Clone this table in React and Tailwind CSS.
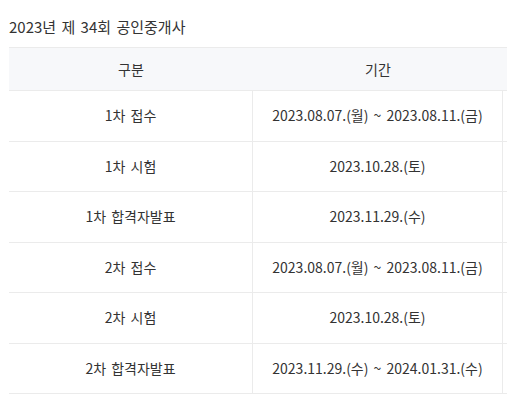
export default function App() {
  const rows = [
    ["1차 접수", "2023.08.07.(월) ~ 2023.08.11.(금)"],
    ["1차 시험", "2023.10.28.(토)"],
    ["1차 합격자발표", "2023.11.29.(수)"],
    ["2차 접수", "2023.08.07.(월) ~ 2023.08.11.(금)"],
    ["2차 시험", "2023.10.28.(토)"],
    ["2차 합격자발표", "2023.11.29.(수) ~ 2024.01.31.(수)"],
  ];
  return (
    <div
      className="w-[507px] h-[400px] overflow-hidden bg-white text-[#333] text-[14px] [word-spacing:2px]"
      style={{ fontFamily: '"Noto Sans CJK KR", "Noto Sans", sans-serif' }}
    >
      <div className="pl-[9px] pt-[17px] leading-[20px] h-[47px] text-[15px]">2023년 제 34회 공인중개사</div>
      <div className="ml-[9px] w-[620px]">
        <div className="grid grid-cols-[244px_250px_126px] h-[44px] bg-[#f7f8fa] border-y border-[#ebebeb]">
          <div className="flex items-center justify-center">구분</div>
          <div className="flex items-center justify-center">기간</div>
          <div></div>
        </div>
        {rows.map(([a, b], i) => (
          <div
            key={i}
            className="grid grid-cols-[244px_250px_126px] h-[50.5px] border-b border-[#ebebeb]"
          >
            <div className="flex items-center justify-center border-r border-[#ebebeb]">{a}</div>
            <div className="flex items-center justify-center border-r border-[#ebebeb]">{b}</div>
            <div></div>
          </div>
        ))}
      </div>
    </div>
  );
}
